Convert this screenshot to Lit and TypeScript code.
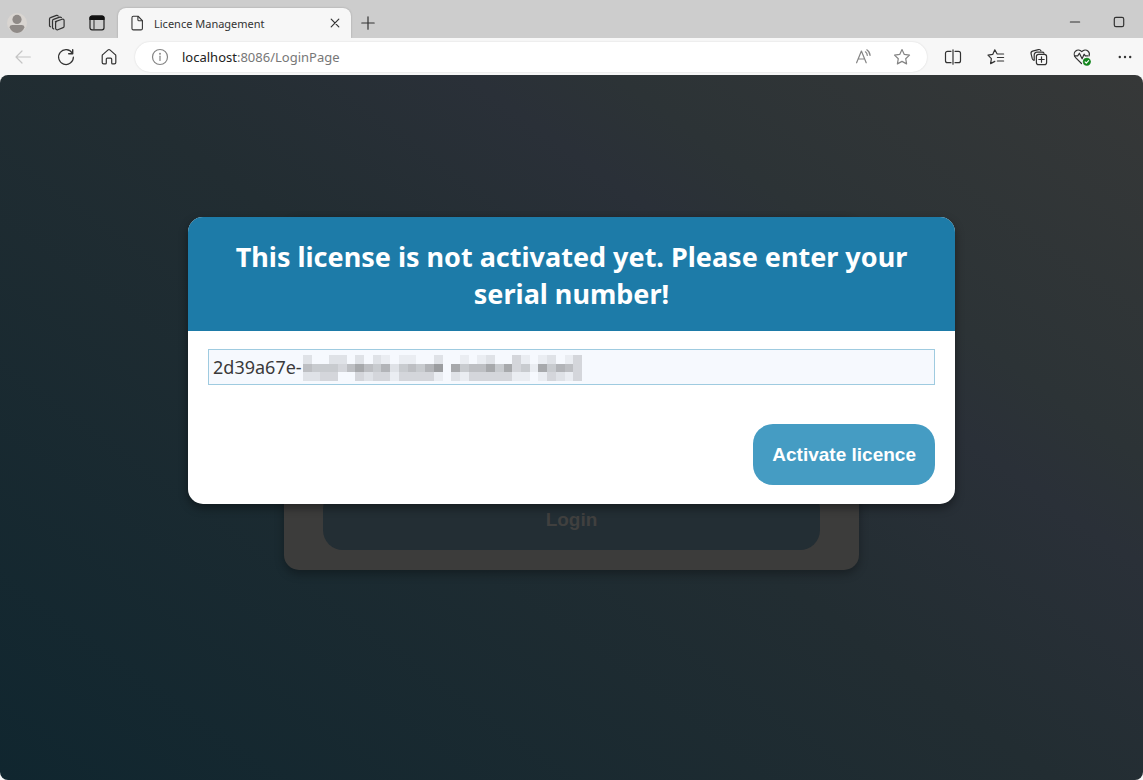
import { LitElement, html, svg, css } from "lit";
import { customElement, state } from "lit/decorators.js";

// Darkness levels (0-9) of the blocks that hide the rest of the serial number.
const MASK_ROWS = [
  "20022020210110020010120031012013",
  "54443575462454680745574734174653",
  "22330032331333310213333311013213",
];

const CELL = 9;

@customElement("serial-mask")
export class SerialMask extends LitElement {
  static styles = css`
    :host {
      display: block;
    }
    svg {
      display: block;
      width: 100%;
      height: 100%;
    }
  `;

  render() {
    const columns = MASK_ROWS[0].length;
    return html`<svg
      viewBox="0 0 ${columns * CELL} ${MASK_ROWS.length * CELL}"
      preserveAspectRatio="none"
      shape-rendering="crispEdges"
      aria-hidden="true"
    >
      ${MASK_ROWS.map((row, y) =>
        [...row].map(
          (level, x) => svg`<rect x=${x * CELL} y=${y * CELL} width=${CELL} height=${CELL}
            fill="#000" fill-opacity=${Number(level) * 0.046} />`
        )
      )}
    </svg>`;
  }
}

const icon = (body: unknown, size = 20) => html`<svg
  width=${size}
  height=${size}
  viewBox="0 0 20 20"
  fill="none"
  stroke="currentColor"
  stroke-width="1.2"
  stroke-linecap="round"
  stroke-linejoin="round"
  aria-hidden="true"
>
  ${body}
</svg>`;

const icons = {
  profile: svg`<circle cx="10" cy="10" r="10" fill="#d9d5d1" stroke="none"/>
    <circle cx="10" cy="6.400" r="4.600" fill="#8f8a87" stroke="none"/>
    <path d="M2.600 14.600c0-1.800 1.200-2.600 2.800-2.600h9.200c1.600 0 2.800.8 2.800 2.600C16.200 18 13.400 20 10 20s-6.200-2-7.400-5.400z" fill="#8f8a87" stroke="none"/>`,
  workspaces: svg`<path d="M8.400 8.600l6.600-2.400a1.500 1.500 0 0 1 2.100 1.400v5.600c0 .6-.4 1.200-1 1.400l-5.300 2.100a1.600 1.600 0 0 1-2.200-1.500V9.800c0-.5.300-1 .8-1.200z"/>
    <path d="M5.500 14.400V7.900c0-.7.400-1.300 1-1.500l6.200-2.300c.7-.2 1.300 0 1.700.6"/><path d="M2.500 12.400V6.100c0-.7.400-1.300 1-1.500l6-2.200c.7-.2 1.300 0 1.700.6"/><path d="M5.500 14.400c0 .6.500 1.200 1.200 1.500M2.500 12.400c0 .6.300 1.100 1 1.400"/>`,
  tabMenu: svg`<rect x="3" y="3.200" width="14" height="13.600" rx="2" stroke="#222"/>
    <path d="M3 6.500V5.200a2 2 0 0 1 2-2h10a2 2 0 0 1 2 2v1.300z" fill="#111" stroke="#111"/><path d="M7 7.500v9" stroke="#444"/>`,
  page: svg`<path d="M6 2.500h5.200L16 7.300v8.700a1.600 1.600 0 0 1-1.600 1.600H6A1.600 1.600 0 0 1 4.400 16V4.100A1.600 1.600 0 0 1 6 2.500z"/><path d="M11 2.700v3.600c0 .7.500 1.200 1.200 1.200h3.600"/>`,
  close: svg`<path d="M6.200 6.200l7.600 7.600M13.800 6.200l-7.600 7.600"/>`,
  plus: svg`<path d="M10 3.800v12.400M3.800 10h12.400"/>`,
  minimize: svg`<path d="M5.400 10h9.200"/>`,
  maximize: svg`<rect x="5.300" y="5.300" width="9.400" height="9.400" rx="1.600"/>`,
  back: svg`<path d="M17.300 10H3M9 4L3 10l6 6"/>`,
  refresh: svg`<path d="M16.300 6.200A7.400 7.400 0 1 0 17.400 10"/><path d="M16.700 2.800v4h-4" stroke-width="1.400"/>`,
  home: svg`<path d="M3.200 8.800c0-.5.200-.9.600-1.200l5.300-4.700a1.400 1.400 0 0 1 1.800 0l5.300 4.700c.4.300.6.700.6 1.200v6.700c0 .8-.6 1.400-1.400 1.400h-1.800c-.5 0-.9-.4-.9-.9v-3.800c0-.6-.5-1.100-1.100-1.100H8.400c-.6 0-1.100.5-1.100 1.100V16c0 .5-.4.9-.9.900H4.600c-.8 0-1.400-.6-1.400-1.400z"/>`,
  info: svg`<circle cx="10" cy="10" r="7.500"/><path d="M10 9.200v4.300"/><circle cx="10" cy="6.700" r=".4"/>`,
  readAloud: svg`<path d="M2.600 15.800L7.400 4l4.800 11.800M4.200 12h6.400"/><path d="M11.400 4.800c1.200.9 1.800 2 1.900 3.600M12.800 2.800c2 1.300 3.100 3.200 3.300 5.600"/>`,
  star: svg`<path d="M10 2.600l2.300 4.800 5.200.7-3.800 3.600.9 5.200-4.600-2.500-4.600 2.500.9-5.200L2.500 8.100l5.200-.7z"/>`,
  split: svg`<path d="M8 4.300H4.500A2 2 0 0 0 2.500 6.300v7.400a2 2 0 0 0 2 2H8M12 4.300h3.500a2 2 0 0 1 2 2v7.400a2 2 0 0 1-2 2H12M10 2.800v14.400"/>`,
  favorites: svg`<path d="M11 6.800L8.800 2.800 6.700 7.400l-4.700.7 3.400 3.500-.8 5 4.200-2.200M11.400 7h6.200M11.400 10.500h6.200M11.400 14h6.200"/>`,
  collections: svg`<rect x="7.400" y="7.400" width="10.200" height="10.200" rx="2.200"/><path d="M12.500 9.800v5.400M9.800 12.500h5.400"/>
    <path d="M4.700 13.200c-.8-.2-1.200-.8-1.400-1.500L2.100 6.800c-.3-1.200.4-2.300 1.500-2.600l5.800-1.600c1.200-.3 2.100.2 2.500 1.200"/><path d="M5.200 13.200V7.900c0-1.500 1.200-2.700 2.700-2.700h5.300c.9 0 1.500.3 1.800 1"/>`,
  essentials: svg`<path d="M9.500 16.500L3.600 10.600c-1.800-1.900-1.800-4.700-.1-6.400 1.800-1.700 4.500-1.500 6.300.4 1.800-1.900 4.500-2.100 6.300-.4 1.300 1.300 1.600 3.200.9 4.800"/>
    <path d="M2.500 8.900h3.200l1.700-2.700 2.700 5.600 2-4.600 1.200 1.700h2.400"/><circle cx="14.800" cy="14.800" r="3.700" fill="#12851c" stroke="#12851c" stroke-width=".5"/><path d="M13.100 14.900l1.200 1.200 2.300-2.400" stroke="#fff"/>`,
  more: svg`<g fill="currentColor" stroke="none"><circle cx="4.800" cy="10" r="1.200"/><circle cx="10" cy="10" r="1.200"/><circle cx="15.200" cy="10" r="1.200"/></g>`,
};

@customElement("browser-chrome")
export class BrowserChrome extends LitElement {
  static styles = css`
    :host {
      display: block;
      color: #333;
      font-family: "Noto Sans", sans-serif;
    }
    svg {
      display: block;
    }
    button {
      display: block;
      margin: 0;
      padding: 0;
      border: 0;
      background: none;
      color: inherit;
    }
    .tabs {
      display: flex;
      height: 38px;
      background: #cdcdcd;
    }
    .tools {
      display: flex;
      align-items: center;
      gap: 20px;
      padding: 8px 11px 0 7px;
    }
    .tab {
      display: flex;
      align-items: center;
      box-sizing: border-box;
      width: 233px;
      margin-top: 8px;
      padding: 0 6px 0 10px;
      gap: 8px;
      border-radius: 8px 8px 0 0;
      background: #f7f7f7;
      box-shadow: 0 0 2px rgba(0, 0, 0, 0.25);
      font-size: 11px;
    }
    .title {
      flex: 1;
      white-space: nowrap;
    }
    .new {
      padding: 8px 7px 0;
    }
    .controls {
      display: flex;
      gap: 24px;
      margin-left: auto;
      padding: 5px 14px 0 0;
    }
    .bar {
      position: relative;
      display: flex;
      align-items: center;
      gap: 23px;
      height: 37px;
      padding: 0 8px 0 13px;
      background: #f7f7f7;
    }
    .disabled {
      color: #c4c4c4;
    }
    .address {
      display: flex;
      align-items: center;
      flex: 1;
      min-width: 0;
      height: 30px;
      box-sizing: border-box;
      margin: 0 -7px;
      padding: 0 15px;
      border-radius: 15px;
      background: #fff;
      box-shadow: 0 0 2px rgba(0, 0, 0, 0.14);
      color: #858585;
      font-size: 13px;
    }
    .url {
      flex: 1;
      padding-left: 12px;
      color: #777;
      text-decoration: none;
      white-space: nowrap;
    }
    .host {
      color: #222;
    }
    .address button + button {
      margin-left: 18px;
    }
  `;

  render() {
    return html`
      <div class="tabs">
        <div class="tools">
          <button aria-label="Profile">${icon(icons.profile)}</button>
          <button aria-label="Workspaces">${icon(icons.workspaces)}</button>
          <button aria-label="Tab actions menu">${icon(icons.tabMenu)}</button>
        </div>
        <div class="tab">
          ${icon(icons.page, 18)}
          <span class="title">Licence Management</span>
          <button aria-label="Close tab">${icon(icons.close)}</button>
        </div>
        <button class="new" aria-label="New tab">${icon(icons.plus)}</button>
        <div class="controls">
          <button aria-label="Minimize">${icon(icons.minimize)}</button>
          <button aria-label="Maximize">${icon(icons.maximize)}</button>
        </div>
      </div>
      <div class="bar">
        <button class="disabled" aria-label="Back">${icon(icons.back)}</button>
        <button aria-label="Refresh">${icon(icons.refresh)}</button>
        <button aria-label="Home">${icon(icons.home)}</button>
        <div class="address">
          <button aria-label="Site information">${icon(icons.info)}</button>
          <a class="url" href="#"><span class="host">localhost</span>:8086/LoginPage</a>
          <button aria-label="Read aloud">${icon(icons.readAloud)}</button>
          <button aria-label="Add to favorites">${icon(icons.star)}</button>
        </div>
        <button aria-label="Split screen">${icon(icons.split)}</button>
        <button aria-label="Favorites">${icon(icons.favorites)}</button>
        <button aria-label="Collections">${icon(icons.collections)}</button>
        <button aria-label="Browser essentials">${icon(icons.essentials)}</button>
        <button aria-label="Settings and more">${icon(icons.more)}</button>
      </div>
    `;
  }
}

@customElement("app-root")
export class AppRoot extends LitElement {
  @state() private serial = "2d39a67e-";

  static styles = css`
    :host {
      display: flex;
      flex-direction: column;
      min-height: 100vh;
      background: #f7f7f7;
      font-family: "Noto Sans", sans-serif;
    }
    .viewport {
      display: grid;
      flex: 1;
      justify-items: center;
      align-items: start;
      padding-top: 142px;
      border-radius: 8px;
      background: linear-gradient(
        36deg,
        #10262f 0%,
        #222d32 50%,
        #2a3038 68%,
        #2c3336 75%,
        #363838 100%
      );
    }
    .login,
    .dialog {
      grid-area: 1 / 1;
      box-sizing: border-box;
    }
    button {
      padding: 19px;
      border: 0;
      border-radius: 20px;
      font: bold 19px/23px "Liberation Sans", sans-serif;
    }
    .login {
      display: flex;
      flex-direction: column;
      justify-content: flex-end;
      width: 50.3%;
      min-height: 353px;
      padding: 20px 39px;
      border-radius: 15px;
      background: #3c3c3b;
      box-shadow: 0 4px 10px rgba(0, 0, 0, 0.3);
    }
    .login button {
      background: #232e34;
      color: #40403f;
    }
    .dialog {
      width: 67.1%;
      overflow: hidden;
      border-radius: 15px;
      background: #fff;
      box-shadow: 0 4px 10px rgba(0, 0, 0, 0.4);
      z-index: 1;
    }
    h1 {
      margin: 0;
      padding: 21px 20px 19px;
      background: #1d7ba8;
      color: #fff;
      font-size: 27px;
      line-height: 37px;
      text-align: center;
    }
    form {
      display: flex;
      flex-direction: column;
      gap: 39px;
      padding: 18px 20px 19px;
    }
    .field {
      position: relative;
    }
    input {
      display: block;
      box-sizing: border-box;
      width: 100%;
      height: 36px;
      padding: 0 4px;
      border: 1px solid #9fcbe0;
      background: #f6f9fe;
      color: #3a3a3a;
      font: 18px "Noto Sans", sans-serif;
      outline: 0;
    }
    serial-mask {
      position: absolute;
      top: 6px;
      left: 95px;
      width: 279px;
      height: 26px;
    }
    form button {
      align-self: flex-end;
      background: #459cc3;
      color: #fff;
    }
  `;

  render() {
    return html`
      <browser-chrome></browser-chrome>
      <main class="viewport">
        <div class="login"><button type="button">Login</button></div>
        <section class="dialog" role="dialog" aria-labelledby="heading">
          <h1 id="heading">This license is not activated yet. Please enter your serial number!</h1>
          <form @submit=${(e: Event) => e.preventDefault()}>
            <div class="field">
              <input
                type="text"
                aria-label="Serial number"
                .value=${this.serial}
                @input=${(e: Event) => (this.serial = (e.target as HTMLInputElement).value)}
              />
              <serial-mask></serial-mask>
            </div>
            <button type="submit">Activate licence</button>
          </form>
        </section>
      </main>
    `;
  }
}
